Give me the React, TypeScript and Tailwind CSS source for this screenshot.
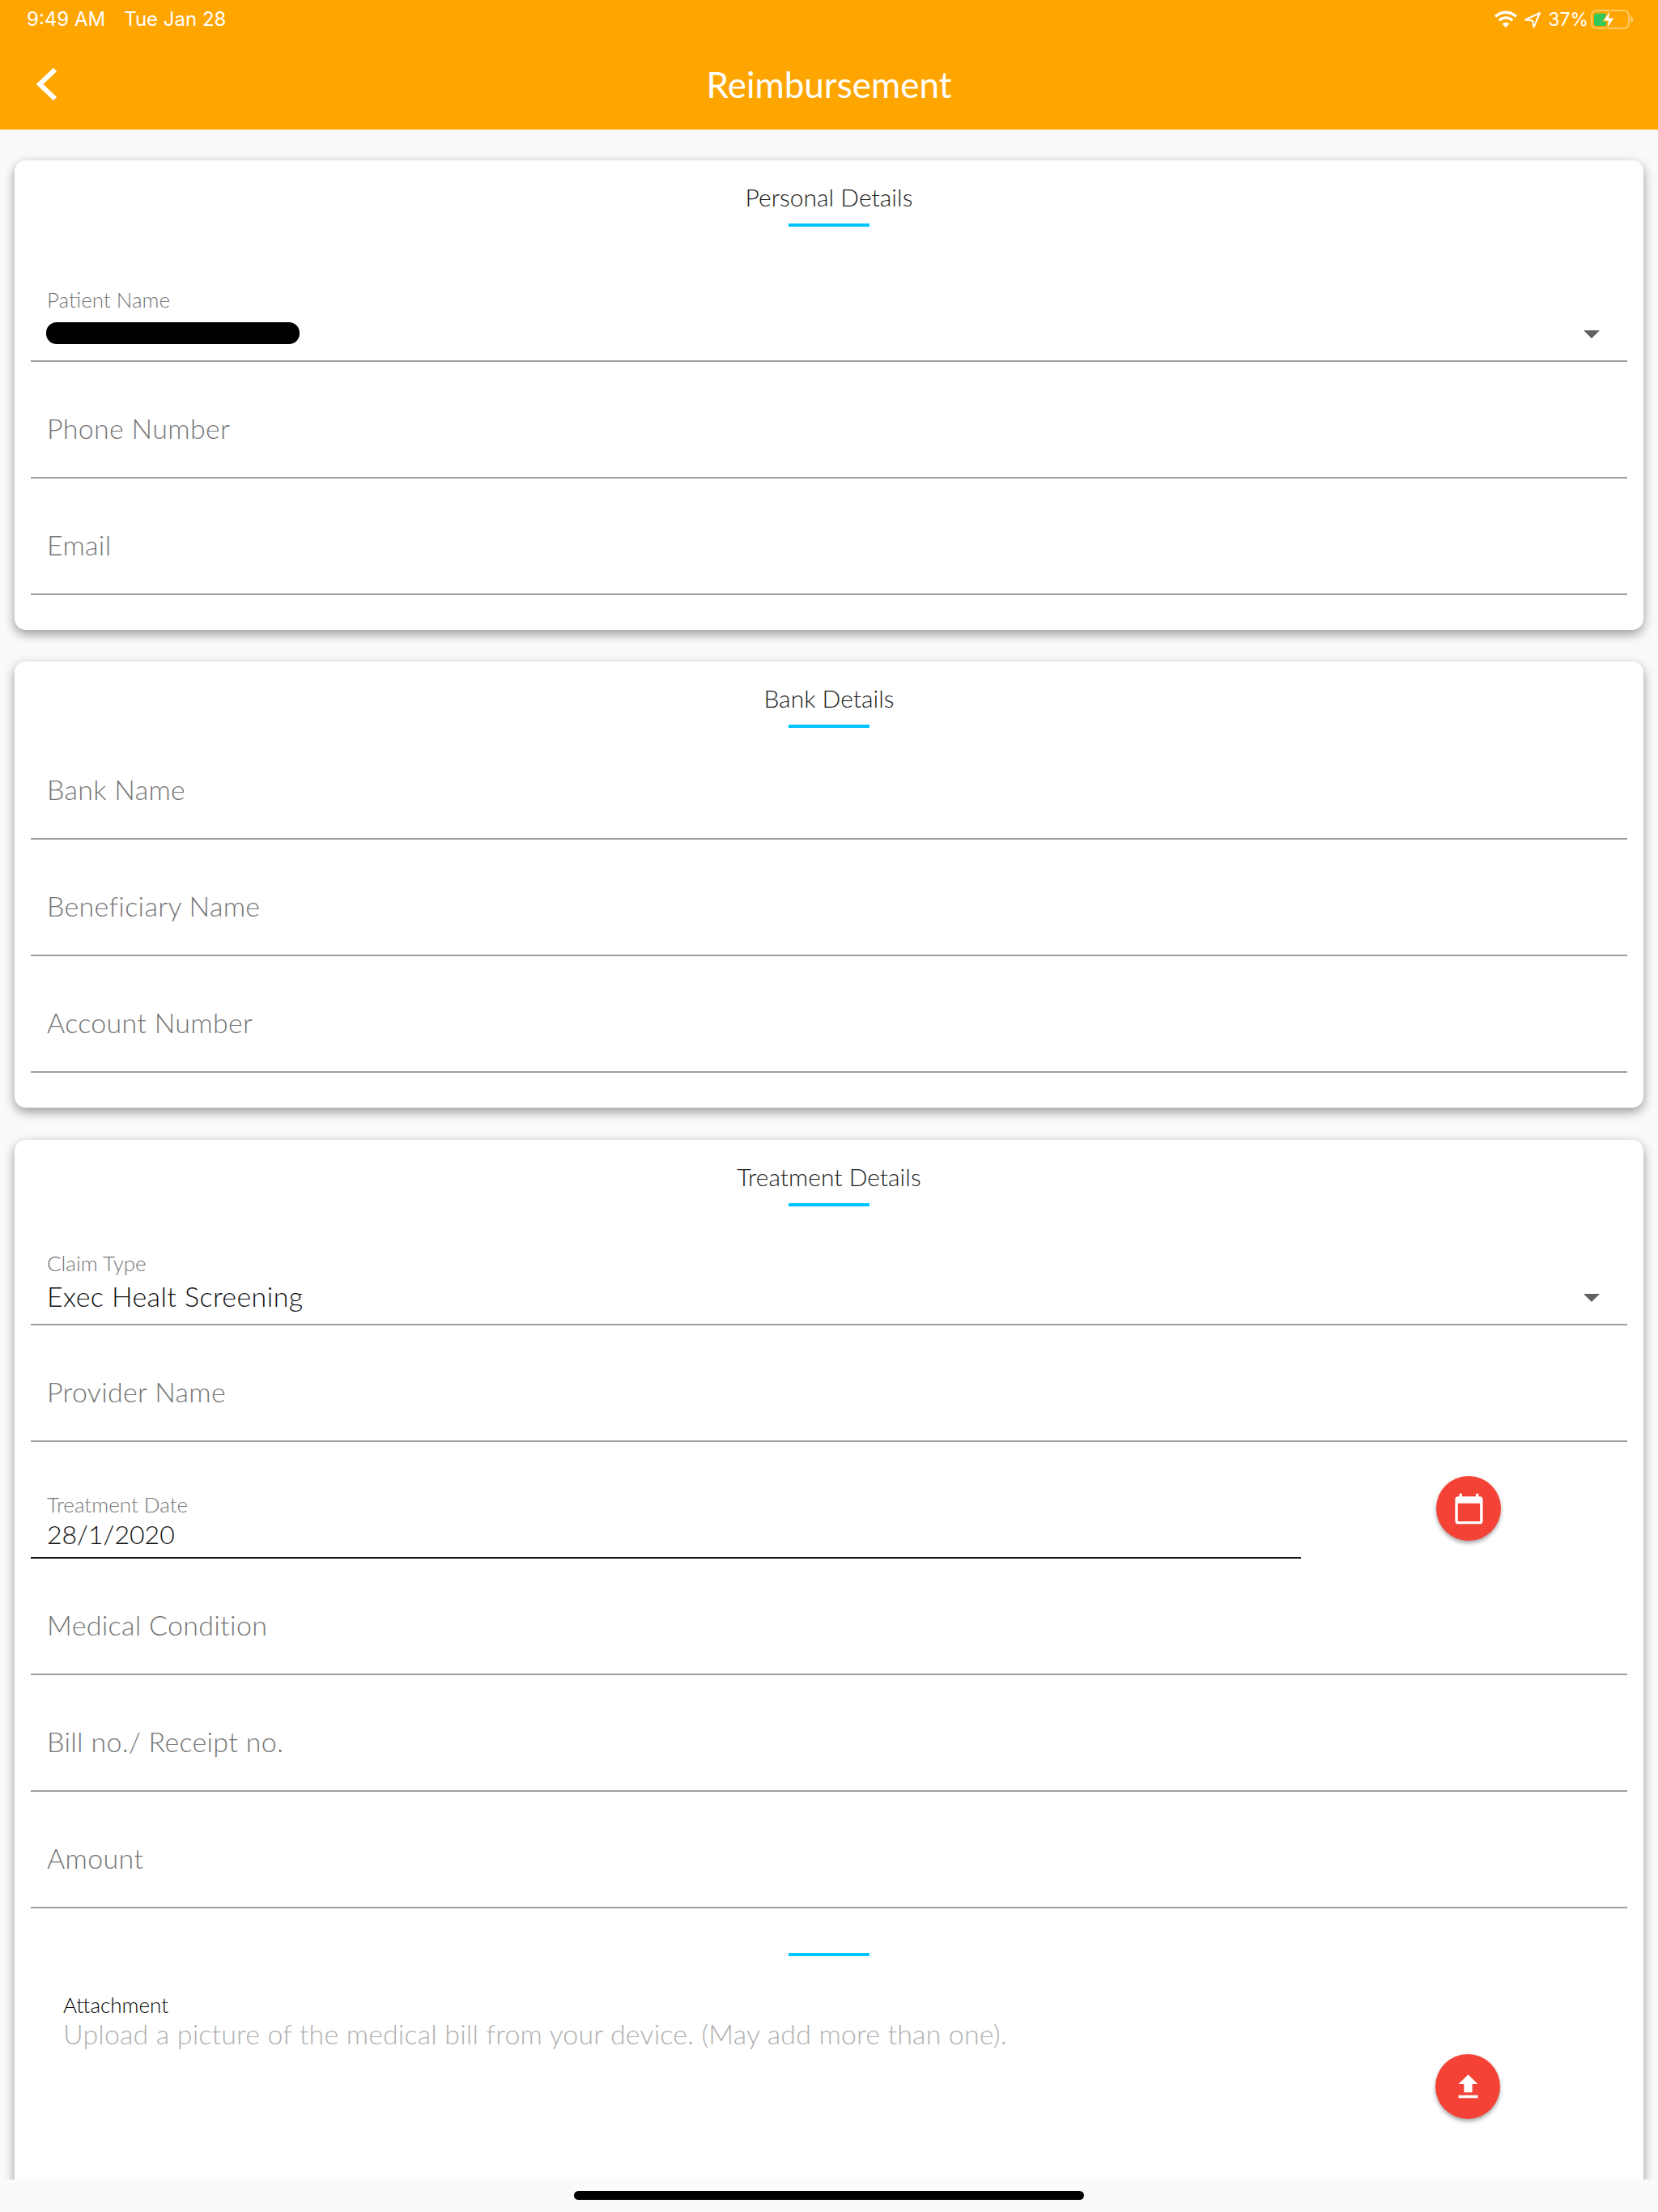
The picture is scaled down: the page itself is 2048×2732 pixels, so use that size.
import type { ReactNode } from "react";

function Heading({ title }: { title: string }) {
  return (
    <div className="flex flex-col items-center pt-[27px]">
      <p className="text-[30px] leading-[36px] font-light text-[#1a1a1a]">{title}</p>
      <div className="mt-[15px] h-[4px] w-[100px] bg-[#00c4ff]" />
    </div>
  );
}

function InputRow({ label, first }: { label: string; first?: string }) {
  return (
    <div className={`flex items-end border-b-2 border-[#9e9e9e] pb-[40px] pl-[20px] ${first ?? "h-[144px]"}`}>
      <span className="text-[34px] leading-[40px] font-light tracking-[0.3px] text-[#757575]">{label}</span>
    </div>
  );
}

function Caret() {
  return <div className="mt-[4px] mr-[34px] h-0 w-0 border-x-[10px] border-t-[10px] border-x-transparent border-t-[#616161]" />;
}

function SelectRow({ label, height, children }: { label: string; height: string; children: ReactNode }) {
  return (
    <div className={`flex flex-col justify-end border-b-2 border-[#9e9e9e] pb-[16px] pl-[20px] ${height}`}>
      <span className="text-[26px] leading-[30px] font-light text-[#757575]">{label}</span>
      <div className="mt-[8px] flex h-[36px] items-center justify-between">
        {children}
        <Caret />
      </div>
    </div>
  );
}

function Fab({ className, d }: { className: string; d: string }) {
  return (
    <div className={`flex h-[80px] w-[80px] shrink-0 items-center justify-center rounded-full bg-[#f44336] shadow-[0_3px_5px_rgba(0,0,0,0.35)] ${className}`}>
      <svg width="41" height="41" viewBox="0 0 24 24" fill="#ffffff">
        <path d={d} />
      </svg>
    </div>
  );
}

function StatusIcons() {
  return (
    <div className="flex items-center">
      <svg width="30" height="24" viewBox="0 0 30 24" fill="none" stroke="#ffffff" strokeWidth="3.4">
        <path d="M2 8.500C9.500 1.500 20.500 1.500 28 8.500" />
        <path d="M6.800 13.200C11.600 8.800 18.400 8.800 23.200 13.200" />
        <path d="M15 22l-4.600-4.800c2.700-2.100 6.500-2.100 9.200 0z" fill="#ffffff" stroke="none" />
      </svg>
      <svg className="ml-[7px]" width="22" height="22" viewBox="0 0 22 22" fill="none" stroke="#ffffff" strokeWidth="2" strokeLinejoin="round">
        <path d="M20 3L2 11.500l9 1 1.500 8z" />
      </svg>
      <span className="ml-[8px] font-[family-name:Inter,sans-serif] text-[23px] leading-none text-white">37%</span>
      <svg className="ml-[3px]" width="54" height="28" viewBox="0 0 54 28" fill="none">
        <rect x="1" y="3" width="46" height="22" rx="6" stroke="#ffffff" strokeOpacity="0.4" strokeWidth="2" />
        <rect x="4" y="6.500" width="15" height="15.500" rx="3" fill="#34c759" />
        <path d="M49 10c2.500.5 3.500 2 3.500 4s-1 3.500-3.500 4z" fill="#ffffff" fillOpacity="0.4" />
        <path d="M24.500 2L15 16h6.500L19 27l10-15h-6.500z" fill="#ffffff" stroke="#ffa500" strokeWidth="1" />
      </svg>
    </div>
  );
}

export default function App() {
  return (
    <div className="flex h-[2732px] w-[2048px] flex-col overflow-hidden bg-[#fafafa] font-[family-name:Lato,sans-serif]">
      <header className="relative h-[160px] shrink-0 bg-[#ffa500]">
        <div className="flex h-[48px] items-center justify-between pr-[29px] pl-[33px]">
          <div className="flex gap-[23px] font-[family-name:Inter,sans-serif] text-[24px] leading-none text-white">
            <span>9:49 AM</span>
            <span>Tue Jan 28</span>
          </div>
          <StatusIcons />
        </div>
        <div className="flex h-[112px] items-center justify-center">
          <h1 className="text-[44px] leading-[50px] text-white">Reimbursement</h1>
        </div>
        <svg className="absolute top-[84px] left-[44px]" width="26" height="40" viewBox="0 0 26 40" fill="none" stroke="#ffffff" strokeWidth="6">
          <path d="M24 2L5 20l19 18" />
        </svg>
      </header>

      <div className="h-[2532px] shrink-0 overflow-hidden px-[18px] pt-[38px]">
        <section className="rounded-[14px] bg-white px-[20px] pb-[43px] shadow-[0_5px_14px_rgba(0,0,0,0.4)]">
          <Heading title="Personal Details" />
          <SelectRow label="Patient Name" height="h-[167px]">
            <div className="h-[27px] w-[313px] -translate-x-[1px] rounded-[13px] bg-black" />
          </SelectRow>
          <InputRow label="Phone Number" />
          <InputRow label="Email" />
        </section>

        <section className="mt-[39px] rounded-[14px] bg-white px-[20px] pb-[43px] shadow-[0_5px_14px_rgba(0,0,0,0.4)]">
          <Heading title="Bank Details" />
          <InputRow label="Bank Name" first="h-[138px]" />
          <InputRow label="Beneficiary Name" />
          <InputRow label="Account Number" />
        </section>

        <section className="mt-[40px] flex flex-col rounded-[14px] bg-white px-[20px] pb-[200px] shadow-[0_5px_14px_rgba(0,0,0,0.4)]">
          <Heading title="Treatment Details" />
          <SelectRow label="Claim Type" height="h-[147px]">
            <span className="text-[34px] leading-[36px] font-light tracking-[0.4px] text-[#111111]">Exec Healt Screening</span>
          </SelectRow>
          <InputRow label="Provider Name" />
          <div className="flex h-[144px] items-start">
            <div className="flex h-[144px] w-[1569px] flex-col justify-end border-b-2 border-[#111111] pb-[10px] pl-[20px]">
              <span className="text-[26px] leading-[30px] font-light text-[#757575]">Treatment Date</span>
              <span className="mt-[4px] text-[32px] leading-[36px] font-light text-[#111111]">28/1/2020</span>
            </div>
            <Fab
              className="mt-[42px] ml-[167px]"
              d="M20 3h-1V1h-2v2H7V1H5v2H4c-1.100 0-2 .9-2 2v16c0 1.100.9 2 2 2h16c1.100 0 2-.9 2-2V5c0-1.100-.9-2-2-2zm0 18H4V8h16v13z"
            />
          </div>
          <InputRow label="Medical Condition" />
          <InputRow label="Bill no./ Receipt no." />
          <InputRow label="Amount" />
          <div className="mt-[55px] h-[4px] w-[100px] self-center bg-[#00c4ff]" />
          <div className="mt-[45px] pl-[40px]">
            <p className="text-[26px] leading-[30px] font-light text-black">Attachment</p>
            <p className="mt-[1px] text-[34px] leading-[40px] font-light tracking-[0.13px] text-[#b0b0b0]">
              Upload a picture of the medical bill from your device. (May add more than one).
            </p>
          </div>
          <Fab className="mt-[5px] mr-[157px] self-end" d="M9 16h6v-6h4l-7-7-7 7h4zm-4 2h14v2H5z" />
        </section>
      </div>

      <div className="flex h-[40px] items-start justify-center pt-[14px]">
        <div className="h-[11px] w-[630px] rounded-full bg-black" />
      </div>
    </div>
  );
}
